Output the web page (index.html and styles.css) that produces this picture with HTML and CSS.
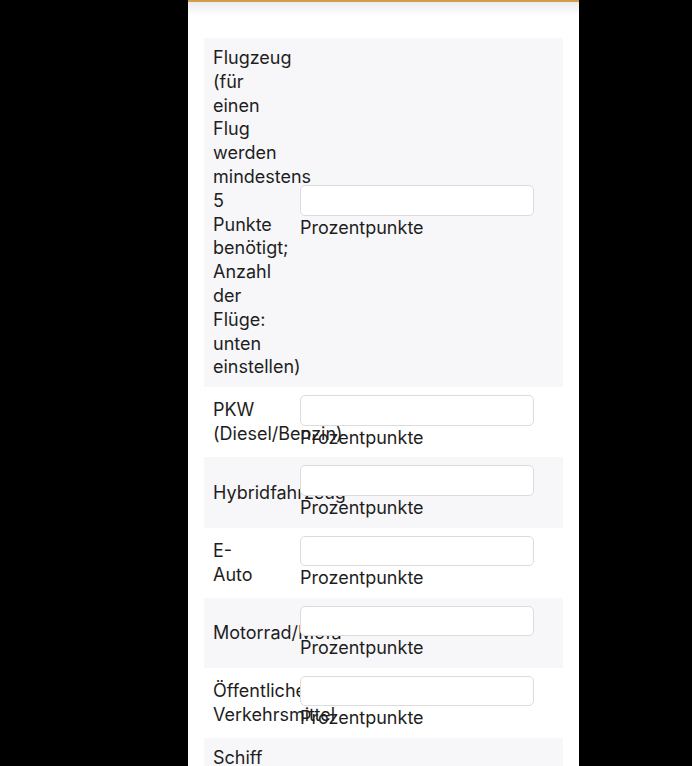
FILE: index.html
```html
<!DOCTYPE html>
<html lang="de">
<head>
<meta charset="utf-8">
<title>Verkehrsmittel</title>
<link rel="stylesheet" href="styles.css">
</head>
<body>
<main class="page">
  <div class="topbar"></div>
  <table class="mix">
    <colgroup><col class="col-label"><col class="col-input"></colgroup>
    <tbody>
      <tr>
        <td class="label">Flugzeug (für einen Flug werden mindestens 5 Punkte benötigt; Anzahl der Flüge: unten einstellen)</td>
        <td class="field"><input type="text" class="pp"><span class="unit">Prozentpunkte</span></td>
      </tr>
      <tr>
        <td class="label">PKW (Diesel/Benzin)</td>
        <td class="field"><input type="text" class="pp"><span class="unit">Prozentpunkte</span></td>
      </tr>
      <tr>
        <td class="label">Hybridfahrzeug</td>
        <td class="field"><input type="text" class="pp"><span class="unit">Prozentpunkte</span></td>
      </tr>
      <tr>
        <td class="label">E-Auto</td>
        <td class="field"><input type="text" class="pp"><span class="unit">Prozentpunkte</span></td>
      </tr>
      <tr>
        <td class="label">Motorrad/Mofa</td>
        <td class="field"><input type="text" class="pp"><span class="unit">Prozentpunkte</span></td>
      </tr>
      <tr>
        <td class="label">Öffentliche Verkehrsmittel</td>
        <td class="field"><input type="text" class="pp"><span class="unit">Prozentpunkte</span></td>
      </tr>
      <tr>
        <td class="label">Schiff (z. B. Fähre, Kreuzfahrt)</td>
        <td class="field"><input type="text" class="pp"><span class="unit">Prozentpunkte</span></td>
      </tr>
    </tbody>
  </table>
</main>
</body>
</html>
```
FILE: styles.css
```css
html, body {
  margin: 0;
  padding: 0;
  background: #000;
}
body {
  padding-left: 188px;
  height: 766px;
  overflow: hidden;
  font-family: Inter, "Open Sans", "Liberation Sans", sans-serif;
  color: #1e1e1e;
}
.page {
  width: 359px;
  min-height: 766px;
  background: #fff;
  border-top: 2px solid #d29c4c;
  padding: 0 16px;
}
.topbar {
  height: 36px;
  margin: 0 -16px;
  background: linear-gradient(#ececec, #fff 14px);
}
.mix {
  width: 359px;
  border-collapse: collapse;
  table-layout: fixed;
  font-size: 18px;
  line-height: 23.8px;
}
.col-label { width: 96px; }
.mix tr:nth-child(odd) { background: #f7f7f9; }
.mix td {
  vertical-align: middle;
  padding: 8px 0;
}
.label {
  padding-left: 9px !important;
  padding-right: 47px !important;
  overflow: visible;
  white-space: normal;
}
.field {
  padding-right: 29px;
}
.pp {
  position: relative;
  display: block;
  box-sizing: border-box;
  width: 234px;
  height: 30.4px;
  margin: 0;
  border: 1px solid #dcdcdc;
  border-radius: 5px;
  background: #fff;
  font: inherit;
}
.unit {
  display: block;
}
```
